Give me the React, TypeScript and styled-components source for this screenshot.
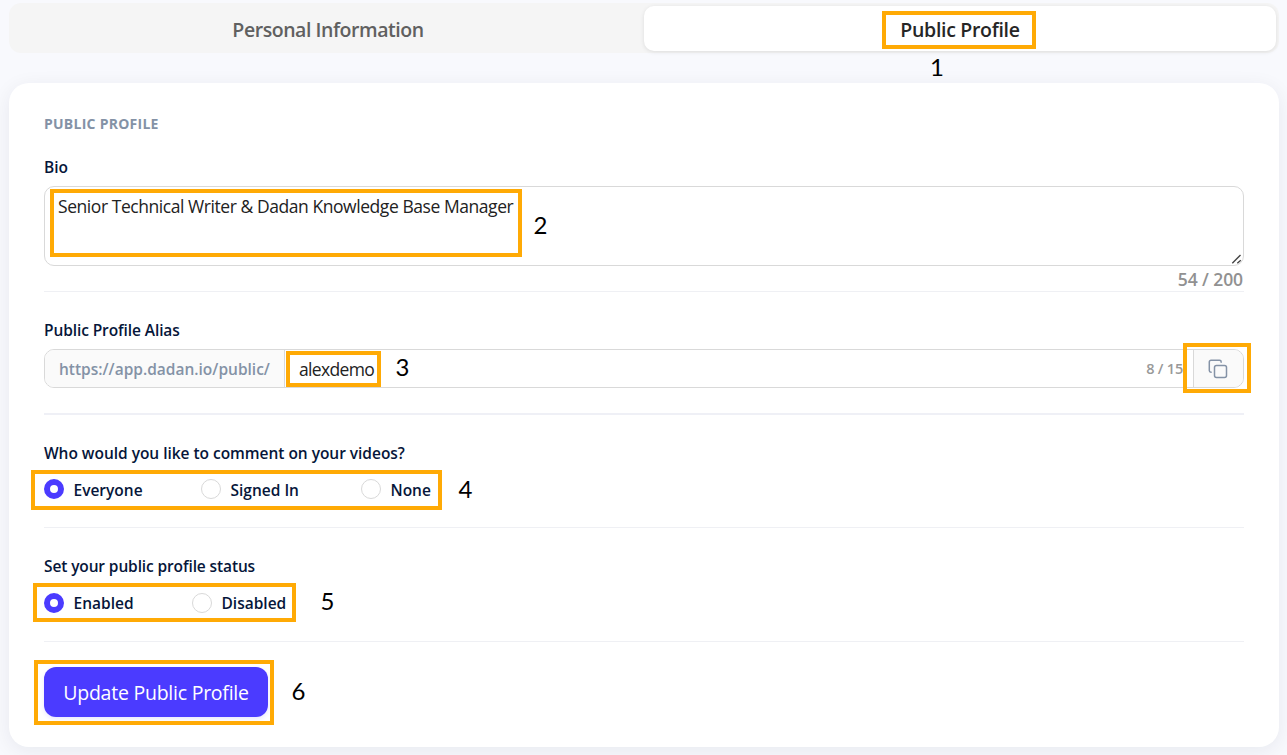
import React, { useState } from "react";
import styled, { createGlobalStyle } from "styled-components";

const GlobalStyle = createGlobalStyle`
  *, *::before, *::after { box-sizing: border-box; }
  html, body { margin: 0; padding: 0; }
  body {
    height: 755px;
    overflow: hidden;
    background: #f8f9fd;
    font-family: "Open Sans", "Noto Sans", sans-serif;
    color: #06163a;
  }
`;

const Page = styled.main`
  position: relative;
  width: 1287px;
  height: 755px;
  padding: 3px 8px 8px 9px;
  overflow: hidden;
`;

const TabBar = styled.nav`
  display: flex;
  height: 50px;
  padding: 3px;
  border-radius: 12px;
  background: #f5f5f5;
`;

const Tab = styled.button<{ $active?: boolean }>`
  flex: 1;
  height: 45px;
  padding: 3px 0 0;
  border: 0;
  border-radius: 10px;
  font: 600 19.5px/42px "Open Sans", sans-serif;
  letter-spacing: ${(p) => (p.$active ? -0.3 : -0.45)}px;
  color: ${(p) => (p.$active ? "#262626" : "#606060")};
  background: ${(p) => (p.$active ? "#fff" : "transparent")};
  box-shadow: ${(p) => (p.$active ? "0 1px 4px rgba(0, 0, 0, 0.1)" : "none")};
`;

const Card = styled.section`
  height: 664px;
  margin-top: 30px;
  padding: 31px 35px 0;
  border-radius: 20px;
  background: #fff;
  box-shadow: 0 4px 20px rgba(20, 30, 60, 0.07);
`;

const Heading = styled.h2`
  margin: 0;
  height: 20px;
  font-size: 14px;
  line-height: 20px;
  font-weight: 700;
  letter-spacing: 0.25px;
  color: #8492a6;
`;

const Label = styled.label<{ $ls?: number }>`
  display: block;
  height: 22px;
  font-size: 15.5px;
  line-height: 23px;
  font-weight: 600;
  letter-spacing: ${(p) => p.$ls ?? -0.03}px;
`;

const BioField = styled.div`
  padding-top: 22px;
  height: 158px;
  border-bottom: 1px solid #eff0f4;
`;

const BioBox = styled.div`
  display: flex;
  justify-content: space-between;
  height: 80px;
  margin-top: 8px;
  padding: 7px 0 0 13px;
  border: 1px solid #d9d9d9;
  border-radius: 10px;
  font-size: 17.5px;
  line-height: 24px;
  letter-spacing: -0.44px;
  color: #222;
`;

const Grip = styled.svg`
  align-self: flex-end;
`;

const Counter = styled.div`
  height: 28px;
  padding-right: 1px;
  font-size: 17.5px;
  line-height: 27px;
  font-weight: 600;
  letter-spacing: -0.1px;
  text-align: right;
  color: #919191;
`;

const AliasField = styled.div`
  height: 123px;
  padding-top: 27px;
  border-bottom: 2px solid #eff0f6;
`;

const AliasRow = styled.div`
  display: flex;
  height: 39px;
  margin-top: 8px;
  border: 1px solid #d9d9d9;
  border-radius: 10px;
  overflow: hidden;
  line-height: 38px;
`;

const Prefix = styled.div`
  width: 240px;
  padding-left: 14px;
  border-right: 1px solid #d9d9d9;
  background: #fafafa;
  color: #8492a6;
  font-size: 15.5px;
  font-weight: 600;
`;

const AliasValue = styled.div`
  flex: 1;
  padding-left: 14px;
  font-size: 17.5px;
  letter-spacing: -0.65px;
  color: #222;
`;

const SmallCounter = styled.div`
  padding-right: 10px;
  font-size: 14.5px;
  font-weight: 600;
  letter-spacing: -0.2px;
  color: #999;
`;

const CopyButton = styled.button`
  display: flex;
  align-items: center;
  justify-content: center;
  width: 50px;
  padding: 0 2px 0 0;
  border: 0;
  border-left: 1px solid #d9d9d9;
  background: #fafafa;
`;

const ChoiceField = styled.div<{ $height: number }>`
  height: ${(p) => p.$height}px;
  padding-top: 27px;
  border-bottom: 1px solid #eff0f4;
`;

const Options = styled.div<{ $top: number }>`
  display: flex;
  margin-top: ${(p) => p.$top}px;
`;

const Option = styled.div<{ $width: number }>`
  display: flex;
  align-items: center;
  width: ${(p) => p.$width}px;
  height: 20px;
  white-space: nowrap;
  cursor: pointer;
`;

const Radio = styled.span<{ $on: boolean }>`
  flex: none;
  width: 20px;
  height: 20px;
  margin-right: 9.5px;
  border: ${(p) => (p.$on ? "6px solid #4b3bff" : "1px solid #d9d9d9")};
  border-radius: 50%;
  background: #fff;
`;

const OptionText = styled.span<{ $drop: number }>`
  padding-top: ${(p) => p.$drop}px;
  font-size: 15.5px;
  line-height: 20px;
  font-weight: 600;
`;

const Submit = styled.button`
  width: 224px;
  height: 50px;
  margin-top: 25px;
  padding: 1px 0 0;
  border: 0;
  border-radius: 12px;
  background: #4b3bff;
  box-shadow: 0 2px 4px rgba(75, 59, 255, 0.12);
  color: #fff;
  font: 400 19.5px/49px "Open Sans", sans-serif;
  letter-spacing: -0.24px;
`;

const Frame = styled.div<{ $x: number; $y: number; $w: number; $h: number }>`
  position: absolute;
  left: ${(p) => p.$x}px;
  top: ${(p) => p.$y}px;
  width: ${(p) => p.$w}px;
  height: ${(p) => p.$h}px;
  border: 4px solid #ffaa05;
  pointer-events: none;
`;

const Step = styled.span<{ $x: number; $y: number }>`
  position: absolute;
  left: ${(p) => p.$x}px;
  top: ${(p) => p.$y}px;
  font: 400 24px/24px Lato, sans-serif;
  color: #000;
  pointer-events: none;
`;

const frames = [
  [882, 11, 154, 38],
  [50, 189, 472, 68],
  [286, 351, 95, 36],
  [1183, 343, 68, 50],
  [31, 470, 411, 40],
  [33, 583, 263, 39],
  [34, 660, 240, 65],
];

const steps = [
  [930, 55],
  [533.5, 213],
  [395.5, 355],
  [458.5, 477],
  [320.5, 589],
  [291.5, 679],
];

type ChoiceProps = { options: string[]; widths: number[]; top: number; drop: number };

function Choice({ options, widths, top, drop }: ChoiceProps) {
  const [value, setValue] = useState(options[0]);
  return (
    <Options role="radiogroup" $top={top}>
      {options.map((o, i) => (
        <Option key={o} $width={widths[i]} role="radio" aria-checked={o === value} onClick={() => setValue(o)}>
          <Radio $on={o === value} />
          <OptionText $drop={drop}>{o}</OptionText>
        </Option>
      ))}
    </Options>
  );
}

export default function App() {
  return (
    <Page>
      <GlobalStyle />
      <TabBar>
        <Tab>Personal Information</Tab>
        <Tab $active>Public Profile</Tab>
      </TabBar>
      <Card>
        <Heading>PUBLIC PROFILE</Heading>
        <BioField>
          <Label>Bio</Label>
          <BioBox>
            <span>Senior Technical Writer &amp; Dadan Knowledge Base Manager</span>
            <Grip width="12" height="12" viewBox="0 0 12 12" stroke="#444" strokeWidth="1.4">
              <path d="M1.3 10.2 9.5 2M6.3 10.2 9.8 7.2" />
            </Grip>
          </BioBox>
          <Counter>54 / 200</Counter>
        </BioField>
        <AliasField>
          <Label $ls={-0.1}>Public Profile Alias</Label>
          <AliasRow>
            <Prefix>https://app.dadan.io/public/</Prefix>
            <AliasValue>alexdemo</AliasValue>
            <SmallCounter>8 / 15</SmallCounter>
            <CopyButton aria-label="Copy">
              <svg width="20" height="20" viewBox="0 0 20 20" fill="none" stroke="#8492a6" strokeWidth="1.5">
                <rect x="6.5" y="6.5" width="12" height="12" rx="2" />
                <path d="M3.7 13.2H3a1.7 1.7 0 0 1-1.7-1.7V3A1.7 1.7 0 0 1 3 1.3h8.5A1.7 1.7 0 0 1 13.2 3v.7" />
              </svg>
            </CopyButton>
          </AliasRow>
        </AliasField>
        <ChoiceField $height={113}>
          <Label>Who would you like to comment on your videos?</Label>
          <Choice options={["Everyone", "Signed In", "None"]} widths={[157, 160, 90]} top={15} drop={1} />
        </ChoiceField>
        <ChoiceField $height={114}>
          <Label $ls={-0.12}>Set your public profile status</Label>
          <Choice options={["Enabled", "Disabled"]} widths={[148, 110]} top={16} drop={0} />
        </ChoiceField>
        <Submit>Update Public Profile</Submit>
      </Card>
      {frames.map(([x, y, w, h]) => (
        <Frame key={`${x}-${y}`} $x={x} $y={y} $w={w} $h={h} />
      ))}
      {steps.map(([x, y], i) => (
        <Step key={i} $x={x} $y={y}>{i + 1}</Step>
      ))}
    </Page>
  );
}
